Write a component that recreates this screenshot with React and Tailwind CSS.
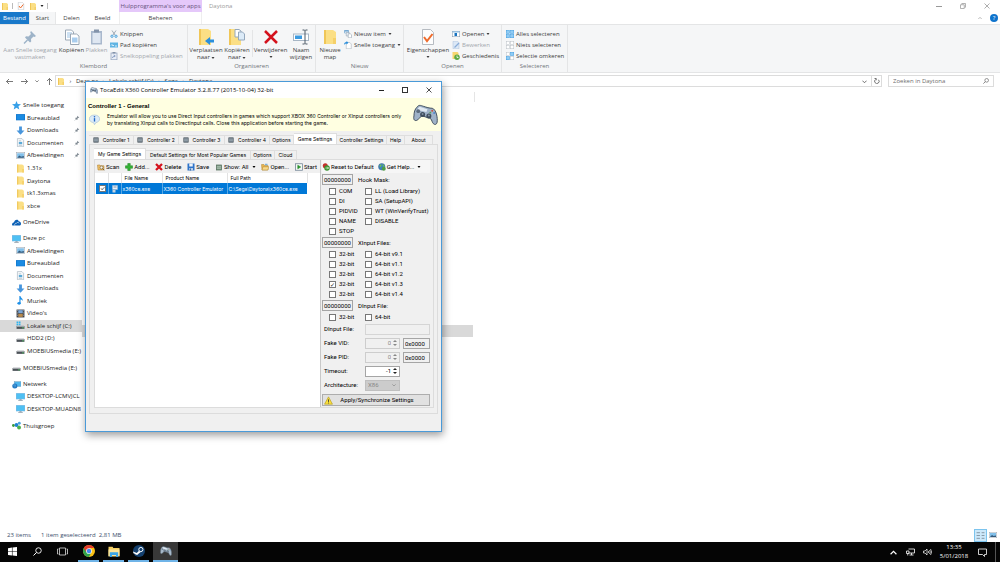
import { useState } from "react";
import clsx from "clsx";

/* ---------- icons ---------- */

const Svg = ({ className, box = "0 0 16 16", children }) => (
  <svg viewBox={box} className={clsx("shrink-0", className)} fill="none" aria-hidden="true">
    {children}
  </svg>
);

const FolderIcon = ({ className }) => (
  <Svg className={className}>
    <path d="M2 1h9l3 2v12H2z" fill="#fbdf85" />
    <path d="M2 1h2v14H2z" fill="#f0c657" />
    <path d="M11 9h3v6h-3z" fill="#f5d069" />
  </Svg>
);

const PinIcon = ({ className, color = "#9db3c8" }) => (
  <Svg className={className}>
    <path d="M9 2l5 5-1.500 1-1-.4-2.500 2.500.2 2.400-1.200 1L3 8.500 4 7.300l2.500.200L9 5 8.200 3.500z" fill={color} />
    <path d="M5.500 11L2 14.500" stroke={color} strokeWidth="1.500" />
  </Svg>
);

const PagesIcon = ({ className }) => (
  <Svg className={className}>
    <path d="M1.500 1h6l2 2v8h-8z" fill="#fff" stroke="#9aa7b5" />
    <path d="M3 4h5M3 6h5M3 8h5" stroke="#9cc3e6" />
    <path d="M6.500 5h6l2.500 2v8.500H6.500z" fill="#fff" stroke="#9aa7b5" />
    <path d="M8 8.500h5.500v5H8z" fill="#a9cdee" />
  </Svg>
);

const PasteIcon = ({ className }) => (
  <Svg className={className}>
    <rect x="2" y="2" width="11" height="13.500" fill="#a9b8cd" />
    <rect x="3.500" y="4" width="8" height="10" fill="#dfe7f2" />
    <rect x="5" y=".500" width="5" height="3" fill="#8393aa" />
  </Svg>
);

const ScissorsIcon = ({ className }) => (
  <Svg className={className}>
    <path d="M4 1l6 9M12 1L6 10" stroke="#7b8b9b" strokeWidth="1.400" />
    <circle cx="4" cy="12.500" r="2.300" stroke="#2390d8" strokeWidth="1.600" />
    <circle cx="12" cy="12.500" r="2.300" stroke="#2390d8" strokeWidth="1.600" />
  </Svg>
);

const PathIcon = ({ className }) => (
  <Svg className={className}>
    <rect x="0" y="3" width="16" height="10" fill="#5fb4e3" />
    <path d="M2 9l2-2 2 3 2-2M10 10h4" stroke="#fff" strokeWidth="1.500" />
  </Svg>
);

const ShortcutIcon = ({ className }) => (
  <Svg className={className}>
    <rect x="2" y="2" width="12" height="13.500" fill="#e9eef6" stroke="#93a4be" strokeWidth="1.500" />
    <rect x="5" y="0" width="6" height="3" fill="#8393aa" />
    <path d="M5 12c0-3 2-4 5-4M8 5.500L10.500 8 8 10.500" stroke="#6d88b5" strokeWidth="1.500" />
  </Svg>
);

const MoveToIcon = ({ className }) => (
  <Svg className={className}>
    <path d="M1 0h9l3 2v14H1z" fill="#fbdf85" />
    <path d="M1 0h2v16H1z" fill="#f0c657" />
    <path d="M16 10.500h-4V8l-5 4 5 4v-2.500h4z" fill="#2b8fdc" />
  </Svg>
);

const CopyToIcon = ({ className }) => (
  <Svg className={className}>
    <path d="M0 0h9l3 2v14H0z" fill="#fbdf85" />
    <path d="M0 0h2v16H0z" fill="#f0c657" />
    <path d="M6 .500h4l2 1.500v6H6z" fill="#fff" stroke="#94a8bd" />
    <path d="M9.500 3h4L15.500 5v6h-6z" fill="#dcebf8" stroke="#94a8bd" />
  </Svg>
);

const DeleteIcon = ({ className, width = 2.5 }) => (
  <Svg className={className}>
    <path d="M2 2l12 12M14 2L2 14" stroke="#d4121d" strokeWidth={width} />
  </Svg>
);

const RenameIcon = ({ className }) => (
  <Svg className={className}>
    <rect x=".500" y="5" width="15" height="6.500" fill="#fff" stroke="#a7b6c5" />
    <rect x="2" y="6.500" width="7" height="3.500" fill="#3d9be0" />
    <path d="M9.500 1h2l.500.500.500-.500h2M12 1.500v13M9.500 15h2l.500-.500.500.500h2" stroke="#4d5a66" />
  </Svg>
);

const NewItemIcon = ({ className }) => (
  <Svg className={className}>
    <path d="M1 1h8v5H1z" fill="#fff" stroke="#4b8fc4" />
    <path d="M1 1h8v2H1z" fill="#4b8fc4" />
    <path d="M4.500 5h6v7h-6z" fill="#e8eef4" stroke="#8797a7" />
    <path d="M8.500 7.500h4l2.500 2v6H8.500z" fill="#fff" stroke="#8797a7" />
  </Svg>
);

const QuickPageIcon = ({ className }) => (
  <Svg className={className}>
    <path d="M4.500 3h7l3 3v9.500h-10z" fill="#fff" stroke="#9aa4ae" />
    <path d="M0 8c0-4 2-6 5-6V0l4 3.500L5 7V5C3 5 1.500 6 0 8z" fill="#2b8fdc" />
  </Svg>
);

const PropsIcon = ({ className }) => (
  <Svg className={className}>
    <path d="M2.500.500h8l3 3v12h-11z" fill="#fdfdfd" stroke="#a4abb2" strokeWidth=".800" />
    <path d="M4 8l3 4 5.500-7" stroke="#ee6b2c" strokeWidth="2" />
  </Svg>
);

const OpenIcon = ({ className }) => (
  <Svg className={className}>
    <rect x=".500" y="2.500" width="15" height="11" fill="#fff" stroke="#7f93a6" />
    <path d="M1 2.500h14v2.500H1z" fill="#8fbce0" />
    <path d="M5 6h5v6H5z" fill="#1873c0" />
  </Svg>
);

const EditIcon = ({ className }) => (
  <Svg className={className}>
    <path d="M2 .500h9l3 3v12H2z" fill="#dce8f6" stroke="#a9bedb" />
    <path d="M5 13l9-9" stroke="#8aacd8" strokeWidth="2.500" />
  </Svg>
);

const HistoryIcon = ({ className }) => (
  <Svg className={className}>
    <path d="M1 0h10l2 2v12H1z" fill="#f6d66f" />
    <circle cx="10" cy="10.500" r="5.500" fill="#5ba844" />
    <path d="M10 7v4h3" stroke="#fff" strokeWidth="1.500" />
  </Svg>
);

const SelectIcon = ({ className, on = [] }) => (
  <Svg className={className}>
    {[[0, 0], [8.5, 0], [0, 8.5], [8.5, 8.5]].map(([x, y], i) => (
      <rect
        key={i}
        x={x + 0.5}
        y={y + 0.5}
        width="6.500"
        height="6.500"
        fill={on[i] ? "#8fccf5" : "#fff"}
        stroke={on[i] ? "#3c9be0" : "#b9bfc5"}
      />
    ))}
  </Svg>
);

const MonitorIcon = ({ className, stand }) => (
  <Svg className={className}>
    <rect x="0" y="2" width="16" height="11" fill={stand ? "#7bb9e2" : "#1173c8"} />
    <rect x="1" y="3" width="14" height="9" fill={stand ? "#4fc0f3" : "#1b8be2"} />
    {stand && <path d="M6 13h4v1h2v1.500H4V14h2z" fill="#8c9aa6" />}
  </Svg>
);

const DownIcon = ({ className }) => (
  <Svg className={className}>
    <path d="M5.500 1h5v7H15l-7 7.500L1 8h4.500z" fill="#4795dc" />
  </Svg>
);

const DocIcon = ({ className }) => (
  <Svg className={className}>
    <path d="M2.500 1h8l3 3v11.500h-11z" fill="#f5f8fa" stroke="#9aa9b6" />
    <path d="M5 5h4M5 13h6" stroke="#9aa9b6" />
    <path d="M5 7h6v4H5z" fill="#5aa9d6" />
  </Svg>
);

const PhotoIcon = ({ className }) => (
  <Svg className={className}>
    <rect x=".500" y="2.500" width="15" height="11" fill="#fff" stroke="#9aa5b0" />
    <rect x="2" y="4" width="12" height="8" fill="#82c0ea" />
    <path d="M2 12l4-4 3 2 5-1v3z" fill="#34597a" />
  </Svg>
);

const StarIcon = ({ className }) => (
  <Svg className={className}>
    <path d="M8 0l2.200 5.500 5.800.300-4.500 3.700 1.500 5.700L8 12l-5 3.200 1.500-5.700L0 5.800l5.800-.300z" fill="#37a0e8" />
  </Svg>
);

const CloudIcon = ({ className }) => (
  <Svg className={className}>
    <path d="M0 12c0-3 2-4 3.500-4C4 5 6 3 8.500 3c2 0 3 1 3.500 3 2 0 4 1 4 4s-2 3.500-3 3.500H2C1 13.500 0 13 0 12z" fill="#0a5fb4" />
    <path d="M5 13.500c-1-3 1-4.500 3-4 1-2.500 4-2 4.500 0" stroke="#fff" />
  </Svg>
);

const MusicIcon = ({ className }) => (
  <Svg className={className}>
    <path d="M6 0h2c0 4 5 4 4 9-1-3-3-3-4-3v7H6z" fill="#1b8fe8" />
    <ellipse cx="5.500" cy="13" rx="3" ry="2.500" fill="#1b8fe8" />
  </Svg>
);

const FilmIcon = ({ className }) => (
  <Svg className={className}>
    <rect x="1" y="1" width="14" height="14" fill="#3a3f47" />
    <rect x="4" y="2" width="8" height="5.500" fill="#7aa6d6" />
    <rect x="4" y="8.500" width="8" height="5.500" fill="#b98a4d" />
    <path d="M2.500 2v12M13.500 2v12" stroke="#cfd3d8" strokeDasharray="1.500 1.500" />
  </Svg>
);

const DriveIcon = ({ className, system }) => (
  <Svg className={className}>
    {system && <path d="M1 1h3v3H1zM5 1h3v3H5zM1 5h3v3H1zM5 5h3v3H5z" fill="#2fb3ee" />}
    <path d="M1 9h14v5H1z" fill="#4c5258" />
    <path d="M2 8h12l1 2H1z" fill="#b7bcc1" />
    <rect x="11" y="11.500" width="3" height="1.500" fill="#59d36b" />
  </Svg>
);

const NetworkIcon = ({ className }) => (
  <Svg className={className}>
    <rect x="4" y="3" width="12" height="8.500" fill="#4fb5ec" stroke="#7fa6c2" />
    <circle cx="5" cy="10.500" r="4.500" fill="#2178c2" />
    <path d="M2 9c2-1 3 1 5 0M4 13l2-2" stroke="#8fd0f5" />
  </Svg>
);

const HomegroupIcon = ({ className }) => (
  <Svg className={className}>
    <circle cx="2.500" cy="8" r="2.500" fill="#3a9b3a" />
    <circle cx="8" cy="7" r="3.500" fill="#1d82d2" />
    <circle cx="13" cy="4" r="2.500" fill="#4aa3e0" />
    <circle cx="12.500" cy="11.500" r="3.500" fill="#4db04a" />
  </Svg>
);

const GamepadIcon = ({ className, dark = "#3f4d5c", light = "#9fb2c8" }) => (
  <Svg className={className} box="0 0 26 22">
    <path d="M4 3c2-3 4-2 7-1 3 1 6 2 9 2 4 1 6 10 5 15-1 3-4 2-5-1-1-3-2-4-4-4l-6-2c-2 0-3 2-5 4-3 2-5 0-4-4 0-4 1-7 3-9z" fill={light} stroke={dark} strokeWidth="1" />
    <path d="M5 4l2-1.500 8 2.500-1 3-8-2z" fill="#dfe8f1" />
    <circle cx="5.500" cy="7" r="2" fill={dark} opacity=".7" />
    <circle cx="10" cy="10.500" r="2.600" fill={dark} />
    <circle cx="16.500" cy="12" r="2.600" fill={dark} />
    <circle cx="20" cy="6.500" r="1" fill="#c9503e" />
    <circle cx="22" cy="9" r="1" fill="#4b86cf" />
    <circle cx="18" cy="8.500" r="1" fill="#59a552" />
    <circle cx="10" cy="10" r="1" fill="#8292a3" />
    <circle cx="16.500" cy="11.500" r="1" fill="#8292a3" />
  </Svg>
);

const InfoIcon = ({ className }) => (
  <Svg className={className}>
    <path d="M8 1.500c4.500 0 7.500 2.500 7.500 5.500s-2.500 5-5.500 5.500L8 15.500 6.500 12.500C3 12 .500 10 .500 7S3.500 1.500 8 1.500z" fill="#dcecf8" stroke="#a9c2d8" />
    <path d="M8 6v5" stroke="#2368c4" strokeWidth="2" />
    <circle cx="8" cy="4" r="1.200" fill="#2368c4" />
  </Svg>
);

const GridDotIcon = ({ className }) => (
  <Svg className={className}>
    <rect x="2" y="2" width="12" height="12" fill="#75828c" stroke="#4d565e" strokeWidth="1.500" />
    <path d="M3 6h10M3 9.500h10" stroke="#a8b5bf" strokeWidth="1.500" />
  </Svg>
);

const ShowIcon = ({ className }) => (
  <Svg className={className}>
    <rect x="3" y="4" width="10" height="10" fill="#7f9a86" stroke="#55705d" strokeWidth="1.500" />
    <path d="M4 7.500h8M4 10.500h8" stroke="#b8cdbd" strokeWidth="1.500" />
  </Svg>
);

const ScanIcon = ({ className }) => (
  <Svg className={className}>
    <path d="M1 4h5l1 1.500h7V14H2z" fill="#eec067" stroke="#a87a2a" />
    <circle cx="9" cy="9" r="3" fill="#f6f4e8" stroke="#6d5a3a" strokeWidth="1.200" />
    <path d="M11 11l3.500 3.500" stroke="#6d5a3a" strokeWidth="1.800" />
  </Svg>
);

const OpenFolderIcon = ({ className }) => (
  <Svg className={className}>
    <path d="M1 3h5l1 2h7v9H2z" fill="#e9b54e" stroke="#b1842c" />
    <path d="M4 7.500h12L13.500 14H2z" fill="#f8d98a" stroke="#b1842c" />
    <path d="M8 1.500h5v3H8z" fill="#7fb2dc" />
  </Svg>
);

const PlusIcon = ({ className }) => (
  <Svg className={className}>
    <path d="M5.500 1h5v4.500H15v5h-4.500V15h-5v-4.500H1v-5h4.500z" fill="#35b335" stroke="#1d7f22" />
  </Svg>
);

const SaveIcon = ({ className }) => (
  <Svg className={className}>
    <path d="M1 1h14v14H1z" fill="#2d73c9" />
    <path d="M4.500 1h7v6h-7z" fill="#eef4fb" />
    <path d="M4 10h8v5H4z" fill="#b9cfea" />
    <path d="M5.500 11h2v4h-2z" fill="#1e4f91" />
  </Svg>
);

const StartIcon = ({ className }) => (
  <Svg className={className}>
    <rect x="1" y="1.500" width="14" height="13" fill="#f4f8f4" stroke="#6c7f92" strokeWidth="1.500" />
    <path d="M5.500 4.500l6 3.500-6 3.500z" fill="#2ba02f" stroke="#17741d" />
  </Svg>
);

const ResetIcon = ({ className }) => (
  <Svg className={className}>
    <circle cx="6.500" cy="5.500" r="5" fill="#c4302c" />
    <circle cx="10" cy="10" r="5.500" fill="#38922f" />
    <path d="M7 10h6M10.500 7.500L13 10l-2.500 2.500" stroke="#e8f6e4" strokeWidth="1.500" />
  </Svg>
);

const GlobeIcon = ({ className }) => (
  <Svg className={className}>
    <circle cx="7.500" cy="7.500" r="6.500" fill="#3b7fc4" stroke="#37618d" />
    <path d="M3 4c3-2 5 0 4 2s-3 1-3 4M9 2c3 1 4 4 4 6l-3-1z" fill="#6cbf58" />
    <circle cx="11.500" cy="11.500" r="4" fill="#4f9c46" />
  </Svg>
);

const WarningIcon = ({ className }) => (
  <Svg className={className}>
    <path d="M8 1.500l7 13H1z" fill="#fbe03a" stroke="#b79d1e" strokeWidth="1.200" strokeLinejoin="round" />
    <path d="M8 6v4.500M8 11.700v1.500" stroke="#333" strokeWidth="1.500" />
  </Svg>
);

const Caret = ({ className }) => (
  <Svg className={clsx("w-[4px] h-[4px]", className)} box="0 0 8 8">
    <path d="M1 2h6L4 6z" fill="currentColor" />
  </Svg>
);

const CloseGlyph = ({ className }) => (
  <Svg className={className} box="0 0 12 12">
    <path d="M1 1l10 10M11 1L1 11" stroke="currentColor" strokeWidth="1.600" />
  </Svg>
);

const ChevronGlyph = ({ className, up }) => (
  <Svg className={className} box="0 0 12 12">
    <path d={up ? "M1 9l5-5 5 5" : "M1 4l5 5 5-5"} stroke="currentColor" strokeWidth="2" />
  </Svg>
);

const SearchGlyph = ({ className }) => (
  <Svg className={className} box="0 0 18 18">
    <circle cx="11" cy="7" r="5.500" stroke="currentColor" strokeWidth="1.800" />
    <path d="M7 11l-6 6" stroke="currentColor" strokeWidth="2" />
  </Svg>
);

/* ---------- explorer ---------- */

const ribbonTabs = [
  { label: "Bestand", width: "w-[29px]", style: "bg-[#1979ca] text-white" },
  { label: "Start", width: "w-[27px]", style: "bg-[#f5f6f7] border-x border-[#e6e7e8]" },
  { label: "Delen", width: "w-[31px]" },
  { label: "Beeld", width: "w-[31px]" },
];

function TitleBar() {
  return (
    <header className="flex h-6 text-[#444]">
      <div className="flex flex-col">
        <div className="flex h-3 items-center gap-[3px] pl-px text-[#555]">
          <FolderIcon className="w-[8px] h-[9px]" />
          <span className="h-[6px] w-px bg-[#bbb]" />
          <PropsIcon className="ml-px w-[8px] h-[8px]" />
          <FolderIcon className="ml-px w-[8px] h-[9px]" />
          <Caret className="text-[#222]" />
          <span className="h-[6px] w-px bg-[#bbb]" />
        </div>
        <nav className="flex h-3">
          {ribbonTabs.map((t) => (
            <button key={t.label} className={clsx("h-full", t.width, t.style)}>
              {t.label}
            </button>
          ))}
        </nav>
      </div>
      <div className="ml-px flex w-[83px] flex-col">
        <div className="flex h-3 items-center justify-center bg-[#e5c8fa] text-[#66537a]">
          Hulpprogramma's voor apps
        </div>
        <button className="h-3 border-x border-[#eee]">Beheren</button>
      </div>
      <span className="pl-[7px] pt-[2px] text-[#9a9a9a]">Daytona</span>
      <div className="ml-auto flex flex-col items-end text-[#999]">
        <div className="flex h-3 items-center gap-[18px] pr-[10px]">
          <button aria-label="Minimaliseren"><span className="block h-px w-[6px] bg-[#999]" /></button>
          <button aria-label="Herstellen">
            <Svg className="w-[6px] h-[6px]" box="0 0 12 12">
              <path d="M1 3.500h7.500V11H1zM3.500 3V1H11v7.500H9" stroke="currentColor" strokeWidth="1.500" />
            </Svg>
          </button>
          <button aria-label="Sluiten"><CloseGlyph className="w-[6px] h-[6px]" /></button>
        </div>
        <div className="flex h-3 items-center gap-[8px] pr-[2px]">
          <ChevronGlyph up className="w-[4px] h-[4px]" />
          <button className="flex h-[8px] w-[8px] items-center justify-center rounded-full bg-[#0f74cd] text-white">
            ?
          </button>
        </div>
      </div>
    </header>
  );
}

function BigButton({ icon: Icon, lines, width, disabled, caret }) {
  return (
    <button className={clsx("flex flex-col items-center pt-[4px] leading-[7px]", width, disabled && "text-[#a3a7ad]")}>
      <Icon className="mb-[2px] w-[16px] h-[16px]" />
      {lines.map((l, i) => (
        <span key={l} className="flex items-center gap-px whitespace-nowrap">
          {l}
          {caret && i === lines.length - 1 && i > 0 && <Caret />}
        </span>
      ))}
      {caret && lines.length === 1 && <Caret className="mt-px" />}
    </button>
  );
}

function SmallButton({ icon: Icon, label, disabled, caret, on }) {
  return (
    <button className={clsx("flex h-[11px] items-center gap-[2px] whitespace-nowrap", disabled && "text-[#a3a7ad]")}>
      {on ? <Icon on={on} className="w-[8px] h-[8px]" /> : <Icon className="w-[8px] h-[8px]" />}
      {label}
      {caret && <Caret />}
    </button>
  );
}

function RibbonGroup({ label, width, children }) {
  return (
    <section className={clsx("flex shrink-0 flex-col border-r border-[#e4e5e6]", width)}>
      <div className="flex flex-1">{children}</div>
      <div className="h-[10px] text-center text-[#70757a]">{label}</div>
    </section>
  );
}

function Ribbon() {
  return (
    <div className="flex h-[49px] border-y border-[#e4e5e6] bg-[#f5f6f7] text-[#3c3c3c]">
      <RibbonGroup label="Klembord" width="w-[188px]">
        <BigButton icon={PinIcon} lines={["Aan Snelle toegang", "vastmaken"]} width="w-[60px]" disabled />
        <BigButton icon={PagesIcon} lines={["Kopiëren"]} width="w-[23px]" />
        <BigButton icon={PasteIcon} lines={["Plakken"]} width="w-[27px]" disabled />
        <div className="pt-[3px]">
          <SmallButton icon={ScissorsIcon} label="Knippen" />
          <SmallButton icon={PathIcon} label="Pad kopiëren" />
          <SmallButton icon={ShortcutIcon} label="Snelkoppeling plakken" disabled />
        </div>
      </RibbonGroup>
      <RibbonGroup label="Organiseren" width="w-[128px]">
        <BigButton icon={MoveToIcon} lines={["Verplaatsen", "naar"]} width="w-[36px]" caret />
        <BigButton icon={CopyToIcon} lines={["Kopiëren", "naar"]} width="w-[26px]" caret />
        <span className="my-[5px] ml-[2px] w-px bg-[#e4e5e6]" />
        <BigButton icon={DeleteIcon} lines={["Verwijderen"]} width="w-[35px]" caret />
        <BigButton icon={RenameIcon} lines={["Naam", "wijzigen"]} width="w-[26px]" />
      </RibbonGroup>
      <RibbonGroup label="Nieuw" width="w-[88px]">
        <BigButton icon={FolderIcon} lines={["Nieuwe", "map"]} width="w-[28px]" />
        <div className="pt-[3px]">
          <SmallButton icon={NewItemIcon} label="Nieuw item" caret />
          <SmallButton icon={QuickPageIcon} label="Snelle toegang" caret />
        </div>
      </RibbonGroup>
      <RibbonGroup label="Openen" width="w-[98px]">
        <BigButton icon={PropsIcon} lines={["Eigenschappen"]} width="w-[48px]" caret />
        <div className="pt-[3px]">
          <SmallButton icon={OpenIcon} label="Openen" caret />
          <SmallButton icon={EditIcon} label="Bewerken" disabled />
          <SmallButton icon={HistoryIcon} label="Geschiedenis" />
        </div>
      </RibbonGroup>
      <RibbonGroup label="Selecteren" width="w-[66px]">
        <div className="pl-[4px] pt-[3px]">
          <SmallButton icon={SelectIcon} label="Alles selecteren" on={[1, 1, 1, 1]} />
          <SmallButton icon={SelectIcon} label="Niets selecteren" on={[0, 0, 0, 0]} />
          <SmallButton icon={SelectIcon} label="Selectie omkeren" on={[0, 1, 1, 0]} />
        </div>
      </RibbonGroup>
    </div>
  );
}

function ArrowGlyph({ d }) {
  return (
    <Svg className="w-[7px] h-[7px]" box="0 0 14 14">
      <path d={d} stroke="currentColor" strokeWidth="1.600" />
    </Svg>
  );
}

function AddressBar() {
  return (
    <div className="mt-[2px] flex h-[12px] items-center pr-[6px] text-[#555]">
      <div className="flex w-[55px] items-center gap-[8px] pl-[6px]">
        <button aria-label="Vorige"><ArrowGlyph d="M14 7H1M6 2L1 7l5 5" /></button>
        <button aria-label="Volgende"><ArrowGlyph d="M0 7h13M8 2l5 5-5 5" /></button>
        <ChevronGlyph className="-mx-px w-[4px] h-[4px]" />
        <button aria-label="Omhoog"><ArrowGlyph d="M7 14V1M2 6l5-5 5 5" /></button>
      </div>
      <div className="flex h-full flex-1 items-center border border-[#dcdcdc]">
        <FolderIcon className="ml-px w-[8px] h-[9px]" />
        {["Deze pc", "Lokale schijf (C:)", "Sega", "Daytona"].map((p) => (
          <button key={p} className="flex text-[#333]">
            <span className="w-[11px] text-center">›</span>
            {p}
          </button>
        ))}
        <ChevronGlyph className="ml-auto mr-[4px] w-[5px] h-[5px]" />
        <button aria-label="Vernieuwen" className="flex h-full w-[10px] items-center justify-center border-l border-[#dcdcdc]">
          <Svg className="w-[6px] h-[6px]" box="0 0 12 12">
            <path d="M9 3.500A4.500 4.500 0 113 3M1 1h3.500v3.500" stroke="currentColor" strokeWidth="1.600" />
          </Svg>
        </button>
      </div>
      <label className="ml-[6px] flex h-full w-[106px] items-center border border-[#dcdcdc] pr-[4px]">
        <input
          type="search"
          aria-label="Zoeken"
          placeholder="Zoeken in Daytona"
          className="w-full min-w-0 pl-[4px] outline-none placeholder:text-[#6d6d6d]"
        />
        <SearchGlyph className="w-[6px] h-[6px]" />
      </label>
    </div>
  );
}

const PcIcon = (props) => <MonitorIcon stand {...props} />;
const SystemDriveIcon = (props) => <DriveIcon system {...props} />;

const navGroups = [
  {
    height: "h-[113px]",
    root: ["Snelle toegang", StarIcon],
    items: [
      ["Bureaublad", MonitorIcon, true],
      ["Downloads", DownIcon, true],
      ["Documenten", DocIcon, true],
      ["Afbeeldingen", PhotoIcon, true],
      ["1.31x", FolderIcon],
      ["Daytona", FolderIcon],
      ["tk1.3xmas", FolderIcon],
      ["xbce", FolderIcon],
    ],
  },
  { height: "h-[12px]", root: ["OneDrive", CloudIcon], items: [] },
  {
    height: "h-[125px]",
    root: ["Deze pc", PcIcon],
    items: [
      ["Afbeeldingen", PhotoIcon],
      ["Bureaublad", MonitorIcon],
      ["Documenten", DocIcon],
      ["Downloads", DownIcon],
      ["Muziek", MusicIcon],
      ["Video's", FilmIcon],
      ["Lokale schijf (C:)", SystemDriveIcon],
      ["HDD2 (D:)", DriveIcon],
      ["MOEBIUSmedia (E:)", DriveIcon],
    ],
  },
  { height: "h-[13px]", root: ["MOEBIUSmedia (E:)", DriveIcon], items: [] },
  {
    height: "h-[37px]",
    root: ["Netwerk", NetworkIcon],
    items: [
      ["DESKTOP-LCMVJCL", PcIcon],
      ["DESKTOP-MUADN8", PcIcon],
    ],
  },
  { height: "h-[13px]", root: ["Thuisgroep", HomegroupIcon], items: [] },
];

function NavPane() {
  const [selected, setSelected] = useState("Lokale schijf (C:)");

  return (
    <nav className="flex w-[82px] shrink-0 flex-col gap-1 pt-[12px] text-[#222]">
      {navGroups.map(({ height, root: [name, RootIcon], items }) => (
        <div key={name} className={clsx("grid auto-rows-fr", height)}>
          <button className="flex min-h-0 items-center gap-[2px] pl-[12px] whitespace-nowrap">
            <RootIcon className="w-[9px] h-[9px]" />
            {name}
          </button>
          {items.map(([label, Icon, pinned]) => (
            <button
              key={label}
              onClick={() => setSelected(label)}
              className={clsx(
                "flex min-h-0 items-center gap-[2px] overflow-hidden pl-[16px] whitespace-nowrap",
                selected === label && "bg-[#d9d9d9]"
              )}
            >
              <Icon className="w-[9px] h-[9px]" />
              {label}
              {pinned && <PinIcon color="#7d8790" className="mr-[2px] ml-auto w-[6px] h-[6px]" />}
            </button>
          ))}
        </div>
      ))}
    </nav>
  );
}

function FilePane() {
  return (
    <main className="flex flex-1 flex-col items-start">
      <div className="mt-[5px] h-[10px] w-[393px] border-r border-[#e5e5e5]" />
      <div className="mt-[223px] h-[12px] w-[391px] bg-[#d9d9d9]" />
    </main>
  );
}

function StatusBar() {
  return (
    <footer className="flex h-[14px] items-center pl-[7px] pr-[3px] text-[#3c4f6d]">
      <span className="w-[34px]">23 items</span>
      <span>1 item geselecteerd</span>
      <span className="ml-[3px]">2,81 MB</span>
      <div className="ml-auto flex items-center gap-[2px]">
        <button aria-label="Details" className="border border-[#7cc4ee] bg-[#cce8fa] p-px">
          <Svg className="w-[9px] h-[9px]">
            <path d="M1 3h6M1 8h6M1 13h6M10 3h5M10 8h5M10 13h5" stroke="#7b8b98" strokeWidth="1.500" />
          </Svg>
        </button>
        <button aria-label="Pictogrammen"><PhotoIcon className="w-[8px] h-[8px]" /></button>
      </div>
    </footer>
  );
}

/* ---------- emulator dialog ---------- */

const outerTabs = [
  ["Controller 1", "w-[45px]", true],
  ["Controller 2", "w-[45px]", true],
  ["Controller 3", "w-[46px]", true],
  ["Controller 4", "w-[45px]", true],
  ["Options", "w-[24px]"],
  ["Game Settings", "w-[43px]"],
  ["Controller Settings", "w-[50px]"],
  ["Help", "w-[18px]"],
  ["About", "w-[28px]"],
];

const innerTabs = [
  ["My Game Settings", "w-[52px]"],
  ["Default Settings for Most Popular Games", "w-[105px]"],
  ["Options", "w-[24px]"],
  ["Cloud", "w-[22px]"],
];

function Tabs({ tabs, initial }) {
  const [active, setActive] = useState(initial);

  return (
    <div role="tablist" className="flex h-[11px] items-end font-[Inter,sans-serif] text-[5px]">
      {tabs.map(([label, width, icon]) => (
        <button
          key={label}
          role="tab"
          aria-selected={active === label}
          onClick={() => setActive(label)}
          className={clsx(
            "flex items-center justify-center gap-[4px] border-r border-t border-[#dedede] whitespace-nowrap",
            width,
            active === label ? "h-[11px] bg-white" : "h-[9px]"
          )}
        >
          {icon && <GridDotIcon className="w-[6px] h-[6px]" />}
          {label}
        </button>
      ))}
    </div>
  );
}

function ToolButton({ icon: Icon, label, caret }) {
  return (
    <button className="flex items-center gap-px whitespace-nowrap">
      <Icon className="w-[8px] h-[8px]" />
      {label}
      {caret && <Caret className="ml-[2px]" />}
    </button>
  );
}

const HeavyDelete = (props) => <DeleteIcon width={4.5} {...props} />;

function Check({ label, checked = false, className }) {
  const [on, setOn] = useState(checked);

  return (
    <label className={clsx("flex h-[10px] items-center gap-[3px] whitespace-nowrap", className)}>
      <input
        type="checkbox"
        aria-label={label ? undefined : "x360ce.exe"}
        checked={on}
        onChange={() => setOn(!on)}
        className="grid w-[7px] h-[7px] shrink-0 appearance-none place-items-center border border-[#777] bg-white text-[6px] leading-none text-[#222] checked:before:content-['✓']"
      />
      {label}
    </label>
  );
}

function MaskBlock({ title, rows }) {
  return (
    <fieldset>
      <div className="flex h-[13px] items-center gap-[5px]">
        <input
          readOnly
          aria-label={title}
          value="00000000"
          className="h-[11px] w-[31px] border border-[#a5a5a5] bg-[#f0f0f0] text-center"
        />
        {title}
      </div>
      {rows.map(([left, right, checked], i) => (
        <div key={i} className="flex pl-[7px]">
          <Check label={left} checked={checked} className="w-[36px]" />
          {right && <Check label={right} />}
        </div>
      ))}
    </fieldset>
  );
}

function Field({ label, id, children }) {
  return (
    <div className="flex h-[14px] items-center">
      <label htmlFor={id} className="w-[43px] pl-[2px]">{label}</label>
      <div className="flex flex-1 gap-[3px]">{children}</div>
    </div>
  );
}

function Spinner({ id, value, disabled }) {
  return (
    <div
      className={clsx(
        "flex h-[11px] w-[35px] items-center border",
        disabled ? "border-[#cdcdcd] text-[#8a8a8a]" : "border-[#a5a5a5] bg-white"
      )}
    >
      <input id={id} defaultValue={value} disabled={disabled} inputMode="numeric" className="w-full min-w-0 text-right" />
      <Svg className="mx-px w-[6px] h-[8px]" box="0 0 12 16">
        <path d="M2 6l4-4 4 4zM2 10l4 4 4-4z" fill={disabled ? "#888" : "#222"} />
      </Svg>
    </div>
  );
}

const hookRows = [
  ["COM", "LL (Load Library)"],
  ["DI", "SA (SetupAPI)"],
  ["PIDVID", "WT (WinVerifyTrust)"],
  ["NAME", "DISABLE"],
  ["STOP"],
];

const xinputRows = [
  ["32-bit", "64-bit v9.1"],
  ["32-bit", "64-bit v1.1"],
  ["32-bit", "64-bit v1.2"],
  ["32-bit", "64-bit v1.3", true],
  ["32-bit", "64-bit v1.4"],
];

function GameList() {
  return (
    <div className="flex flex-1 flex-col">
      <div className="flex h-[13px] items-center justify-between pr-[3px] pl-[2px]">
        <ToolButton icon={ScanIcon} label="Scan" />
        <ToolButton icon={PlusIcon} label="Add..." />
        <ToolButton icon={HeavyDelete} label="Delete" />
        <ToolButton icon={SaveIcon} label="Save" />
        <ToolButton icon={ShowIcon} label="Show: All" caret />
        <ToolButton icon={OpenFolderIcon} label="Open..." />
        <ToolButton icon={StartIcon} label="Start" />
      </div>
      <div className="flex-1 bg-white pl-px">
        <table className="table-fixed w-[211px] font-[Inter,sans-serif] text-[5px] whitespace-nowrap">
          <thead>
            <tr className="h-[10px] text-left">
              <th className="w-[12px] border-r border-[#e2e2e2]" />
              <th className="w-[13px] border-r border-[#e2e2e2]" />
              <th className="w-[41px] border-r border-[#e2e2e2] pl-[3px] font-normal">File Name</th>
              <th className="w-[65px] border-r border-[#e2e2e2] pl-[3px] font-normal">Product Name</th>
              <th className="w-[80px] border-r border-[#e2e2e2] pl-[3px] font-normal">Full Path</th>
            </tr>
          </thead>
          <tbody>
            <tr className="h-[11px] bg-[#0078d7] text-white">
              <td className="border-r border-[#5aa7e4] pl-[3px]"><Check checked /></td>
              <td className="border-r border-[#5aa7e4] pl-[2px]">
                <Svg className="w-[8px] h-[8px]">
                  <path d="M3 1h10v8H3z" fill="#e8f1fa" stroke="#a9bccd" />
                  <path d="M5 4h6" stroke="#5b7a96" strokeWidth="1.500" />
                  <path d="M3 10h6v5H3z" fill="#c6d4e0" />
                </Svg>
              </td>
              <td className="border-r border-[#5aa7e4] pl-px">x360ce.exe</td>
              <td className="border-r border-[#5aa7e4] pl-px">X360 Controller Emulator</td>
              <td className="pl-px">C:\Sega\Daytona\x360ce.exe</td>
            </tr>
          </tbody>
        </table>
      </div>
    </div>
  );
}

function GameOptions() {
  return (
    <div className="w-[113px] border-l border-[#c8c8c8] pr-[3px] pl-px">
      <div className="flex h-[13px] items-center gap-[4px] bg-[#f6f6f6]">
        <ToolButton icon={ResetIcon} label="Reset to Default" />
        <ToolButton icon={GlobeIcon} label="Get Help..." caret />
      </div>
      <MaskBlock title="Hook Mask:" rows={hookRows} />
      <MaskBlock title="XInput Files:" rows={xinputRows} />
      <MaskBlock title="DInput File:" rows={[["32-bit", "64-bit"]]} />
      <Field label="DInput File:" id="dinput">
        <input id="dinput" disabled className="h-[11px] w-full border border-[#d5d5d5]" />
      </Field>
      <Field label="Fake VID:" id="vid">
        <Spinner id="vid" value="0" disabled />
        <input readOnly aria-label="VID" value="0x0000" className="h-[11px] w-0 flex-1 border border-[#a5a5a5] pl-px" />
      </Field>
      <Field label="Fake PID:" id="pid">
        <Spinner id="pid" value="0" disabled />
        <input readOnly aria-label="PID" value="0x0000" className="h-[11px] w-0 flex-1 border border-[#a5a5a5] pl-px" />
      </Field>
      <Field label="Timeout:" id="timeout">
        <Spinner id="timeout" value="-1" />
      </Field>
      <Field label="Architecture:" id="arch">
        <div className="flex h-[11px] w-[35px] items-center border border-[#bfbfbf] bg-[#cccccc] pr-[3px] text-[#888]">
          <select id="arch" disabled className="w-full appearance-none pl-[2px]">
            <option>X86</option>
          </select>
          <ChevronGlyph className="w-[4px] h-[4px]" />
        </div>
      </Field>
      <button className="mt-[2px] flex h-[12px] w-full items-center border border-[#adadad] bg-[#e1e1e1] pl-px">
        <WarningIcon className="w-[9px] h-[9px]" />
        <span className="flex-1 pr-[8px] text-center">Apply/Synchronize Settings</span>
      </button>
    </div>
  );
}

function EmulatorWindow() {
  return (
    <div className="absolute top-[81px] left-[85px] flex h-[351px] w-[357px] flex-col border border-[#4a9ad8] bg-[#f0f0f0] font-[Roboto,'Liberation_Sans',sans-serif] text-[6px] leading-[8px] text-black shadow-[1px_3px_8px_rgba(0,0,0,0.4)]">
      <div className="flex h-[16px] items-center bg-white pr-[9px] pl-[4px] font-['Open_Sans',sans-serif]">
        <GamepadIcon className="w-[8px] h-[7px]" />
        <h1 className="ml-[2px]">TocaEdit X360 Controller Emulator 3.2.8.77 (2015-10-04) 32-bit</h1>
        <div className="ml-auto flex items-center gap-[18px] text-[#222]">
          <button aria-label="Minimize"><span className="block h-px w-[5px] bg-[#222]" /></button>
          <button aria-label="Maximize"><span className="block h-[6px] w-[6px] border border-[#333]" /></button>
          <button aria-label="Close"><CloseGlyph className="w-[6px] h-[6px]" /></button>
        </div>
      </div>

      <div className="flex h-[33px] items-center bg-[#ffffe1] pr-[3px] pl-[2px]">
        <div className="min-w-0 flex-1">
          <h2 className="pb-[3px] font-['Liberation_Sans',sans-serif] font-bold leading-[7px]">Controller 1 - General</h2>
          <div className="flex items-center">
            <InfoIcon className="ml-px w-[11px] h-[11px]" />
            <p className="ml-[7px] font-[Inter,sans-serif] text-[5px] leading-[7px] whitespace-nowrap">
              Emulator will allow you to use Direct Input controllers in games which support XBOX 360 Controller or XInput controllers only
              <br />
              by translating XInput calls to DirectInput calls. Close this application before starting the game.
            </p>
          </div>
        </div>
        <GamepadIcon className="w-[25px] h-[22px]" />
      </div>

      <div className="flex flex-1 flex-col px-[3px] pt-[2px] pb-[17px]">
        <Tabs tabs={outerTabs} initial="Game Settings" />
        <div className="flex flex-1 flex-col border border-[#dcdcdc] pt-[3px] pr-[3px] pb-[5px] pl-[4px]">
          <Tabs tabs={innerTabs} initial="My Game Settings" />
          <div className="flex flex-1 border border-[#dcdcdc]">
            <GameList />
            <GameOptions />
          </div>
        </div>
      </div>
    </div>
  );
}

/* ---------- taskbar ---------- */

function TaskButton({ label, active, open, children }) {
  return (
    <button
      aria-label={label}
      className={clsx(
        "flex h-full items-center justify-center border-b-2",
        open ? "border-[#6fb4e8]" : "border-transparent",
        open && !active ? "w-[21px]" : "w-[25px]",
        active && "bg-[#383838]"
      )}
    >
      {children}
    </button>
  );
}

function Taskbar() {
  return (
    <div className="flex h-[20px] items-center bg-[#050505] pr-[4px] text-white">
      <div className="flex h-full">
        <TaskButton label="Start">
          <Svg className="w-[9px] h-[9px]">
            <path d="M0 2l7-1v6.500H0zM8 1l8-1v7.500H8zM0 8.500h7V15l-7-1zM8 8.500h8V16l-8-1z" fill="#fff" />
          </Svg>
        </TaskButton>
        <TaskButton label="Zoeken"><SearchGlyph className="w-[9px] h-[9px]" /></TaskButton>
        <TaskButton label="Taakweergave">
          <Svg className="w-[11px] h-[9px]" box="0 0 22 18">
            <path d="M5 2h12v14H5zM3 4H1v10h2M19 4h2v10h-2" stroke="#ddd" strokeWidth="1.600" />
          </Svg>
        </TaskButton>
      </div>
      <div className="ml-[3px] flex h-full gap-[4px]">
        <TaskButton label="Chrome" open>
          <Svg className="w-[12px] h-[12px]">
            <circle cx="8" cy="8" r="8" fill="#fbc116" />
            <path d="M8 8L1.100 4A8 8 0 008 16l3-6z" fill="#30a24c" />
            <path d="M1.100 4A8 8 0 0114.900 4H8v4L4 9z" fill="#e33b2e" />
            <circle cx="8" cy="8" r="3.800" fill="#fff" />
            <circle cx="8" cy="8" r="3" fill="#4486f0" />
          </Svg>
        </TaskButton>
        <TaskButton label="Verkenner" open>
          <Svg className="w-[12px] h-[11px]">
            <path d="M0 1h6l1 2h9v12H0z" fill="#f5cf63" />
            <path d="M0 5h16v10H0z" fill="#fbe59a" />
            <path d="M2 9h12v7h-3v-3H5v3H2z" fill="#3aa5e8" />
          </Svg>
        </TaskButton>
        <TaskButton label="Steam" open>
          <Svg className="w-[12px] h-[12px]">
            <circle cx="8" cy="8" r="8" fill="#14406f" />
            <circle cx="10.500" cy="6" r="2.800" fill="#14406f" stroke="#fff" strokeWidth="1.300" />
            <path d="M0 8.500l5 2 3-3 2 2-3 2.500a2.300 2.300 0 01-4 0L.700 11z" fill="#fff" />
          </Svg>
        </TaskButton>
        <TaskButton label="TocaEdit X360" open active>
          <GamepadIcon className="w-[12px] h-[10px]" dark="#5f6e7d" light="#a8bacb" />
        </TaskButton>
      </div>
      <div className="ml-auto flex h-full items-center">
        <ChevronGlyph up className="mr-[9px] w-[7px] h-[7px]" />
        <Svg className="mr-[8px] w-[9px] h-[8px]" box="0 0 18 16">
          <path d="M5 2h12v8H5M11 10v4M7 14h8M1 6h5v5H1zM3.500 11v4" stroke="#fff" strokeWidth="1.600" />
        </Svg>
        <Svg className="mr-[7px] w-[9px] h-[8px]" box="0 0 18 16">
          <path d="M1 6h3l4-4v12l-4-4H1zM10.500 6q1.500 2 0 4M13 4q3 4 0 8M15 2q4.500 6 0 12" stroke="#fff" strokeWidth="1.400" />
        </Svg>
        <div className="w-[30px] text-center leading-[9px]">
          <div>13:35</div>
          <div>5/01/2018</div>
        </div>
        <button aria-label="Meldingen" className="mr-[8px] ml-[9px]">
          <Svg className="w-[9px] h-[9px]" box="0 0 18 18">
            <path d="M1 2h16v11h-4v4l-4-4H1z" stroke="#fff" strokeWidth="1.600" />
          </Svg>
        </button>
        <span className="h-full w-px bg-[#555]" />
      </div>
    </div>
  );
}

function App() {
  return (
    <div className="relative flex min-h-screen flex-col bg-white font-['Open_Sans',sans-serif] text-[6px] leading-[8px]">
      <TitleBar />
      <Ribbon />
      <AddressBar />
      <div className="flex flex-1">
        <NavPane />
        <FilePane />
      </div>
      <StatusBar />
      <Taskbar />
      <EmulatorWindow />
    </div>
  );
}

export default App;
